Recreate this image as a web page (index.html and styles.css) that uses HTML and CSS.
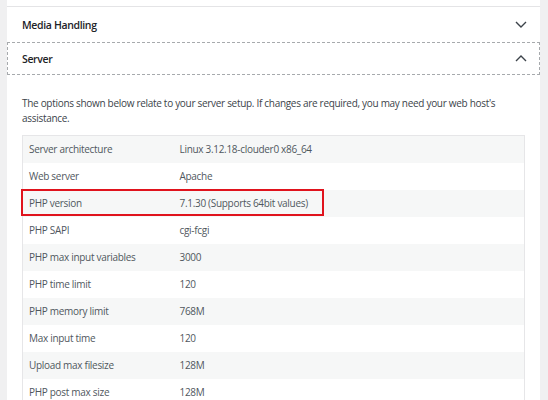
FILE: index.html
```html
<!DOCTYPE html>
<html>
<head>
<meta charset="utf-8">
<link rel="stylesheet" href="styles.css">
</head>
<body>
<div class="page">
  <div class="prev-item"></div>
  <div class="acc-heading">
    <span class="acc-title">Media Handling</span>
    <svg class="chev" width="12" height="7" viewBox="0 0 12 7"><path d="M1 1 L6 6 L11 1" fill="none" stroke="#3c434a" stroke-width="1.4"/></svg>
  </div>
  <div class="acc-heading focused">
    <span class="acc-title">Server</span>
    <svg class="chev" width="12" height="7" viewBox="0 0 12 7"><path d="M1 6 L6 1 L11 6" fill="none" stroke="#3c434a" stroke-width="1.4"/></svg>
  </div>
  <div class="acc-panel">
    <p class="intro">The options shown below relate to your server setup. If changes are required, you may need your web host's assistance.</p>
    <div class="table-wrap">
      <table class="info">
        <tr><td class="label">Server architecture</td><td>Linux 3.12.18-clouder0 x86_64</td></tr>
        <tr><td class="label">Web server</td><td>Apache</td></tr>
        <tr><td class="label">PHP version</td><td>7.1.30 (Supports 64bit values)</td></tr>
        <tr><td class="label">PHP SAPI</td><td>cgi-fcgi</td></tr>
        <tr><td class="label">PHP max input variables</td><td>3000</td></tr>
        <tr><td class="label">PHP time limit</td><td>120</td></tr>
        <tr><td class="label">PHP memory limit</td><td>768M</td></tr>
        <tr><td class="label">Max input time</td><td>120</td></tr>
        <tr><td class="label">Upload max filesize</td><td>128M</td></tr>
        <tr><td class="label">PHP post max size</td><td>128M</td></tr>
      </table>
      <div class="highlight"></div>
    </div>
  </div>
</div>
</body>
</html>
```
FILE: styles.css
```css
html, body {
  margin: 0;
  padding: 0;
  background: #f0f0f1;
  height: 100%;
  overflow: hidden;
}
body {
  font-family: "Open Sans", "Noto Sans", sans-serif;
  font-size: 10px;
  letter-spacing: -0.3px;
  color: #50575e;
}
.page {
  margin-left: 7px;
  width: 533px;
  background: #fff;
  min-height: 100%;
}
.prev-item {
  height: 6px;
  border-bottom: 1px solid #e4e4e6;
}
.acc-heading {
  display: flex;
  align-items: center;
  justify-content: space-between;
  padding: 0 13px 0 15px;
  box-sizing: border-box;
}
.acc-heading:not(.focused) {
  height: 35px;
}
.acc-heading.focused {
  height: 33px;
  outline: 1px dashed #a7aaad;
  outline-offset: -1px;
}
.acc-title {
  font-size: 10.5px;
  letter-spacing: -0.35px;
  font-weight: 600;
  color: #1d2327;
}
.chev {
  display: block;
}
.acc-panel {
  padding: 0 15px;
}
.intro {
  margin: 0;
  padding-top: 21px;
  line-height: 15px;
  color: #3c434a;
}
.table-wrap {
  position: relative;
  margin-top: 9px;
}
.info {
  width: 100%;
  border-collapse: collapse;
  border: 1px solid #e6e6e8;
}
.info td {
  height: 27px;
  padding: 0 6px;
  box-sizing: border-box;
  color: #50575e;
  vertical-align: middle;
}
.info td.label {
  width: 151px;
}
.info tr:nth-child(odd) td {
  background: #f6f7f7;
}
.highlight {
  position: absolute;
  left: -1px;
  top: 54px;
  width: 303px;
  height: 27px;
  border: 2px solid #e0131d;
  box-sizing: border-box;
}
```
